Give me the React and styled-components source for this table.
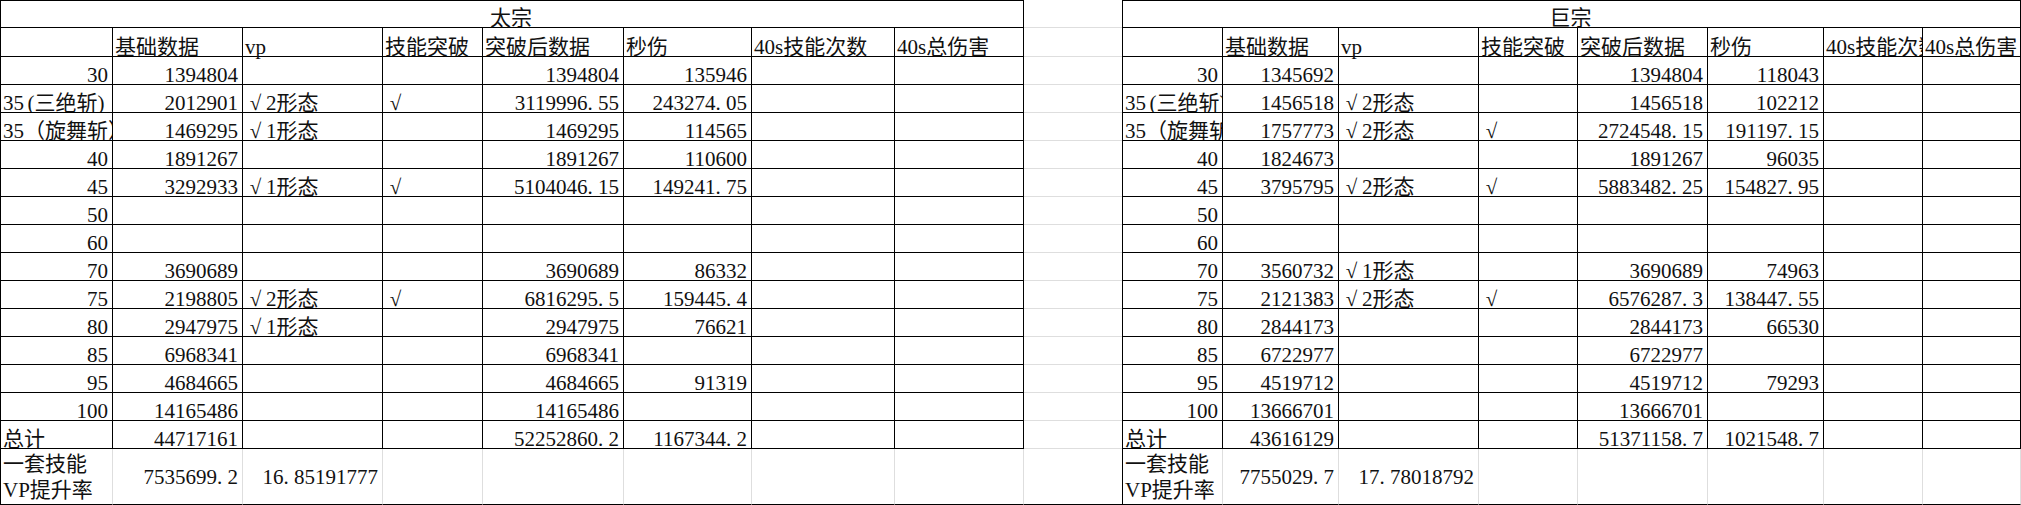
import React from 'react';
import styled, { createGlobalStyle } from 'styled-components';

const GlobalStyle = createGlobalStyle`
  *, *::before, *::after { box-sizing: border-box; }
  html, body { margin: 0; padding: 0; background: #fff; }
`;

// title, header, 14 data rows, the tall summary row
const ROWS = '27px 29px repeat(14, 28px) 56px';
const GRID = '#dedede';

const Sheet = styled.div`
  display: flex;
  align-items: flex-start;
  width: 2021px;
  height: 505px;
  overflow: hidden;
  font-family: "Liberation Serif", "Noto Sans CJK SC", serif;
  font-size: 21px;
  color: #111;
`;

const Table = styled.div`
  display: grid;
  grid-template-columns: ${p => p.$cols.map(w => `${w}px`).join(' ')};
  grid-template-rows: ${ROWS};
  border-left: 1px solid #000;
  border-top: 1px solid #000;
`;

const Cell = styled.div`
  display: flex;
  align-items: ${p => (p.$middle ? 'center' : 'flex-end')};
  justify-content: ${p =>
    p.$align === 'right' ? 'flex-end' : p.$align === 'center' ? 'center' : 'flex-start'};
  grid-column: ${p => (p.$span ? `span ${p.$span}` : 'auto')};
  padding: 0 4px 0 2px;
  border-right: 1px solid ${p => (p.$soft ? GRID : '#000')};
  border-bottom: 1px solid #000;
  line-height: ${p => (p.$wrap ? '26px' : '18px')};
  white-space: ${p => (p.$wrap ? 'normal' : 'nowrap')};
  overflow: ${p => (p.$clip ? 'hidden' : 'visible')};
`;

const Value = styled.span`
  display: block;
  flex: none;
`;

const Check = styled.span`
  display: inline-block;
  width: 1em;
  text-align: center;
`;

// half-width punctuation takes half an em, as in the sheet's font
const Half = styled.span`
  display: inline-block;
  width: 0.5em;
  text-align: ${p => p.$align || 'left'};
`;

const Gap = styled.div`
  display: grid;
  grid-template-rows: ${ROWS};
  width: 98px;
  padding-top: 1px;
`;

const GapCell = styled.div`
  border-bottom: 1px solid ${p => (p.$dark ? '#000' : GRID)};
`;

const HEADERS = ['', '基础数据', 'vp', '技能突破', '突破后数据', '秒伤', '40s技能次数', '40s总伤害'];

const taizong = {
  title: '太宗',
  cols: [112, 130, 140, 100, 141, 128, 143, 129],
  rows: [
    ['30', '1394804', '', '', '1394804', '135946'],
    ['35(三绝斩)', '2012901', '√2形态', '√', '3119996.55', '243274.05'],
    ['35（旋舞斩）', '1469295', '√1形态', '', '1469295', '114565'],
    ['40', '1891267', '', '', '1891267', '110600'],
    ['45', '3292933', '√1形态', '√', '5104046.15', '149241.75'],
    ['50', '', '', '', '', ''],
    ['60', '', '', '', '', ''],
    ['70', '3690689', '', '', '3690689', '86332'],
    ['75', '2198805', '√2形态', '√', '6816295.5', '159445.4'],
    ['80', '2947975', '√1形态', '', '2947975', '76621'],
    ['85', '6968341', '', '', '6968341', ''],
    ['95', '4684665', '', '', '4684665', '91319'],
    ['100', '14165486', '', '', '14165486', ''],
    ['总计', '44717161', '', '', '52252860.2', '1167344.2'],
  ],
  summary: ['7535699.2', '16.85191777'],
};

const juzong = {
  title: '巨宗',
  cols: [100, 116, 140, 99, 130, 116, 99, 98],
  rows: [
    ['30', '1345692', '', '', '1394804', '118043'],
    ['35(三绝斩)', '1456518', '√2形态', '', '1456518', '102212'],
    ['35（旋舞斩）', '1757773', '√2形态', '√', '2724548.15', '191197.15'],
    ['40', '1824673', '', '', '1891267', '96035'],
    ['45', '3795795', '√2形态', '√', '5883482.25', '154827.95'],
    ['50', '', '', '', '', ''],
    ['60', '', '', '', '', ''],
    ['70', '3560732', '√1形态', '', '3690689', '74963'],
    ['75', '2121383', '√2形态', '√', '6576287.3', '138447.55'],
    ['80', '2844173', '', '', '2844173', '66530'],
    ['85', '6722977', '', '', '6722977', ''],
    ['95', '4519712', '', '', '4519712', '79293'],
    ['100', '13666701', '', '', '13666701', ''],
    ['总计', '43616129', '', '', '51371158.7', '1021548.7'],
  ],
  summary: ['7755029.7', '17.78018792'],
};

const isNum = v => /^[\d.]+$/.test(v);

const HALF_ALIGN = { '.': 'left', '(': 'right', ')': 'left' };

const renderText = v => {
  if (v.startsWith('√')) {
    return <><Check>√</Check>{v.slice(1)}</>;
  }
  return v.split(/([.()])/).filter(Boolean).map((part, i) =>
    HALF_ALIGN[part] ? <Half key={i} $align={HALF_ALIGN[part]}>{part}</Half> : part
  );
};

const DataTable = ({ data }) => (
  <Table $cols={data.cols}>
    <Cell $span={8} $align="center"><Value>{data.title}</Value></Cell>
    {HEADERS.map((h, i) => (
      <Cell key={'h' + i} $clip={i === 6}><Value>{h}</Value></Cell>
    ))}
    {data.rows.map((row, r) =>
      HEADERS.map((_, c) => {
        const v = row[c] || '';
        return (
          <Cell key={r + '-' + c} $align={isNum(v) ? 'right' : 'left'} $clip={c === 0 && !isNum(v)}>
            <Value>{renderText(v)}</Value>
          </Cell>
        );
      })
    )}
    <Cell $soft $middle $wrap>
      <Value>一套技能<br />VP提升率</Value>
    </Cell>
    {HEADERS.slice(1).map((_, i) => {
      const v = data.summary[i] || '';
      return (
        <Cell key={'s' + i} $soft $middle $align="right">
          <Value>{renderText(v)}</Value>
        </Cell>
      );
    })}
  </Table>
);

const App = () => (
  <>
    <GlobalStyle />
    <Sheet>
      <DataTable data={taizong} />
      <Gap>
        {Array.from({ length: 17 }, (_, i) => (
          <GapCell key={i} $dark={i === 16} />
        ))}
      </Gap>
      <DataTable data={juzong} />
    </Sheet>
  </>
);

export default App;
